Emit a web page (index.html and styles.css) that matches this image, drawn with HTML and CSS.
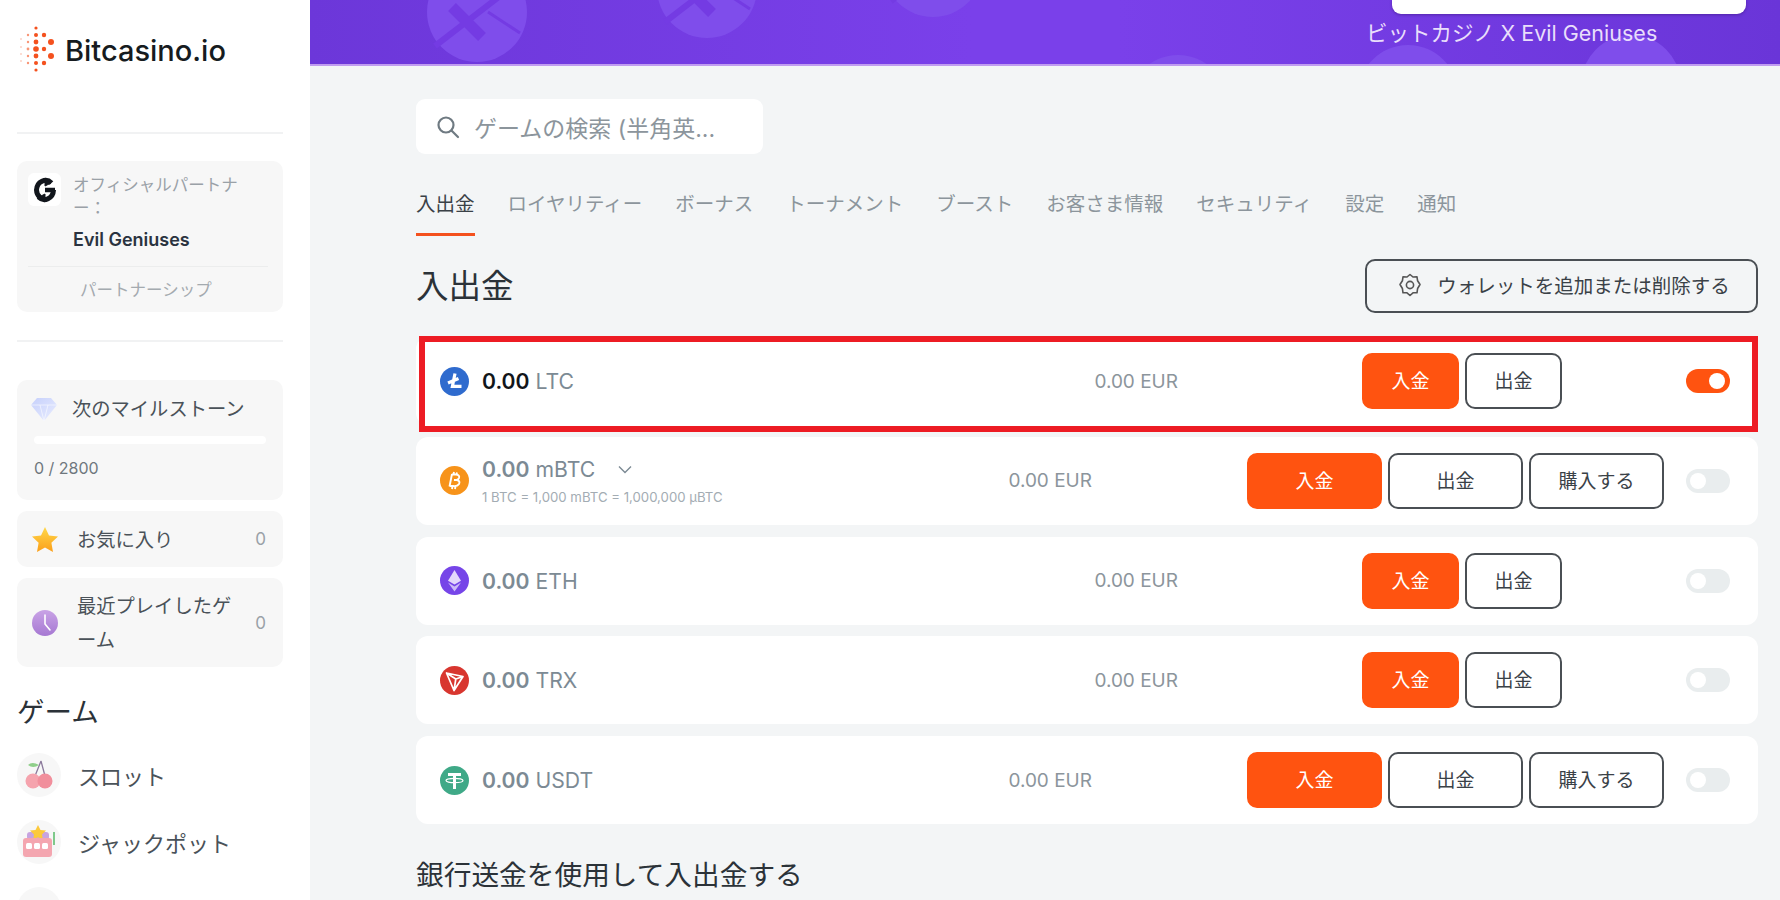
FILE: index.html
```html
<!DOCTYPE html>
<html lang="ja">
<head>
    <meta charset="utf-8">
    <title>Bitcasino.io</title>
    <link rel="stylesheet" href="styles.css">
</head>
<body>
<div class="page">

    <aside class="sidebar">
        <div class="logo">
            <svg class="logo-mark" width="36" height="50" viewBox="0 0 36 50" fill="#f4511e">
                <g opacity=".25"><circle cx="1" cy="14" r="1"/><circle cx="1" cy="22" r="1"/><circle cx="1" cy="29" r="1"/><circle cx="1" cy="36" r="1"/></g>
                <g opacity=".6"><circle cx="8" cy="10" r="1.2"/><circle cx="8" cy="17" r="1.2"/><circle cx="8" cy="24" r="1.4"/><circle cx="8" cy="31" r="1.2"/><circle cx="8" cy="38" r="1.2"/></g>
                <circle cx="16" cy="3" r="1.6"/><circle cx="16" cy="10" r="2"/><circle cx="16" cy="17" r="2.4"/><circle cx="16" cy="24" r="2.8"/><circle cx="16" cy="31" r="2.4"/><circle cx="16" cy="38" r="2"/><circle cx="16" cy="45" r="1.6"/>
                <circle cx="24" cy="10" r="2.2"/><circle cx="24" cy="24" r="2.2"/><circle cx="24" cy="38" r="2.2"/>
                <circle cx="31" cy="17" r="3"/><circle cx="31" cy="31" r="3"/>
            </svg>
            <span class="logo-text">Bitcasino.io</span>
        </div>

        <div class="side-line"></div>

        <div class="side-card partner">
            <div class="partner-top">
                <span class="partner-icon">
                    <svg width="24" height="26" viewBox="0 0 24 26" fill="none" stroke="#12161c" stroke-width="5">
                        <path d="M18.5 6 A9 10 0 0 0 3.5 13 A9 10 0 0 0 7 20.5"/>
                        <path d="M5.5 20 A9 10 0 0 0 20.5 13"/>
                        <path d="M12 13 H22" stroke-width="4.5"/>
                        <path d="M12 1 L18 6 L12 9Z M12 25 L6 20 L12 17Z" fill="#12161c" stroke-width="1"/>
                    </svg>
                </span>
                <div class="partner-text">
                    <div class="partner-label">オフィシャルパートナー：</div>
                    <div class="partner-name">Evil Geniuses</div>
                </div>
            </div>
            <div class="partner-link">パートナーシップ</div>
        </div>

        <div class="side-line second"></div>

        <div class="side-card milestone">
            <div class="milestone-top">
                <svg width="26" height="24" viewBox="0 0 26 24">
                    <defs><linearGradient id="gem" x1="0" y1="0" x2="1" y2="1"><stop offset="0" stop-color="#c6d0fb"/><stop offset="1" stop-color="#e9edff"/></linearGradient></defs>
                    <path d="M6 1 H20 L26 8 L13 24 L0 8Z" fill="url(#gem)"/>
                    <path d="M0 8 H26 M9 8 L13 24 L17 8" stroke="#fff" stroke-width=".8" fill="none" opacity=".7"/>
                </svg>
                <span>次のマイルストーン</span>
            </div>
            <div class="progress"></div>
            <div class="milestone-count">0 / 2800</div>
        </div>

        <div class="side-card count-card">
            <svg width="26" height="25" viewBox="0 0 26 25">
                <defs><linearGradient id="star" x1="0" y1="0" x2="0" y2="1"><stop offset="0" stop-color="#ffd84a"/><stop offset="1" stop-color="#fb9f1a"/></linearGradient></defs>
                <path d="M13 0 L17 8.5 L26 9.6 L19.4 15.8 L21 25 L13 20.4 L5 25 L6.6 15.8 L0 9.6 L9 8.5Z" fill="url(#star)"/>
            </svg>
            <span class="count-name">お気に入り</span>
            <span class="count-num">0</span>
        </div>

        <div class="side-card count-card">
            <svg width="26" height="26" viewBox="0 0 26 26">
                <defs><linearGradient id="clock" x1="0" y1="0" x2="0" y2="1"><stop offset="0" stop-color="#c9a3e6"/><stop offset="1" stop-color="#a678d2"/></linearGradient></defs>
                <circle cx="13" cy="13" r="13" fill="url(#clock)"/>
                <path d="M13 5 V14 L18 20" stroke="#fff" stroke-width="1.6" fill="none" stroke-linecap="round"/>
            </svg>
            <span class="count-name">最近プレイしたゲーム</span>
            <span class="count-num">0</span>
        </div>

        <h3 class="side-title">ゲーム</h3>

        <div class="game-item">
            <span class="game-icon">
                <svg width="28" height="30" viewBox="0 0 28 30">
                    <path d="M16 1 L10 16 M16 1 L20 16" stroke="#8c7a9c" stroke-width="1.3" fill="none"/>
                    <path d="M14 5 Q7 1 3 5 Q8 9 14 5Z" fill="#8fcf8a"/>
                    <circle cx="8" cy="21" r="7.5" fill="#f5a3ad"/>
                    <circle cx="20" cy="21" r="7.5" fill="#f18f9c"/>
                </svg>
            </span>
            <span>スロット</span>
        </div>

        <div class="game-item">
            <span class="game-icon">
                <svg width="34" height="34" viewBox="0 0 34 34">
                    <rect x="5" y="7" width="22" height="8" rx="3" fill="#c7a4e0"/>
                    <path d="M16 0 L18.5 5 L24 5.6 L20 9.4 L21 15 L16 12.3 L11 15 L12 9.4 L8 5.6 L13.5 5Z" fill="#fcc93c"/>
                    <rect x="1" y="13" width="29" height="19" rx="3" fill="#f4a6b0"/>
                    <rect x="4" y="18" width="6" height="6" rx="1.5" fill="#fff"/>
                    <rect x="12" y="18" width="6" height="6" rx="1.5" fill="#fff"/>
                    <rect x="20" y="18" width="6" height="6" rx="1.5" fill="#fff"/>
                    <path d="M32 7 V20" stroke="#7fc98b" stroke-width="2"/>
                </svg>
            </span>
            <span>ジャックポット</span>
        </div>

        <div class="game-item">
            <span class="game-icon">
                <svg width="28" height="30" viewBox="0 0 28 30"><circle cx="14" cy="15" r="9" fill="#5fc98a"/></svg>
            </span>
        </div>
    </aside>

    <main class="main">
        <div class="banner">
            <svg class="banner-art" width="1470" height="65" viewBox="0 0 1470 65">
                <defs>
                    <g id="eg-mark">
                        <circle cx="57" cy="12" r="50" fill="#7f4deb"/>
                        <g fill="none" stroke="#743be3">
                            <path d="M15 46 L80 -4" stroke-width="6"/>
                            <path d="M32 7 L62 37" stroke-width="11"/>
                            <path d="M68 12 L100 33" stroke-width="3"/>
                        </g>
                    </g>
                </defs>
                <use href="#eg-mark" x="110" y="0"/>
                <use href="#eg-mark" x="340" y="-24"/>
                <use href="#eg-mark" x="566" y="-45"/>
                <use href="#eg-mark" x="811" y="93"/>
                <use href="#eg-mark" x="1041" y="83"/>
                <use href="#eg-mark" x="1264" y="73"/>
            </svg>
            <div class="banner-side">
                <div class="banner-button"></div>
                <div class="banner-text">ビットカジノ X Evil Geniuses</div>
            </div>
        </div>

        <div class="content">
            <div class="search">
                <svg width="26" height="26" viewBox="0 0 26 26" fill="none" stroke="#6f7a82" stroke-width="2.2">
                    <circle cx="11" cy="11" r="7.5"/>
                    <path d="M16.5 16.5 L23 23" stroke-linecap="round"/>
                </svg>
                <span>ゲームの検索 (半角英...</span>
            </div>

            <nav class="tabs">
                <span class="tab active">入出金</span>
                <span class="tab">ロイヤリティー</span>
                <span class="tab">ボーナス</span>
                <span class="tab">トーナメント</span>
                <span class="tab">ブースト</span>
                <span class="tab">お客さま情報</span>
                <span class="tab">セキュリティ</span>
                <span class="tab">設定</span>
                <span class="tab">通知</span>
            </nav>

            <div class="title-row">
                <h1>入出金</h1>
                <button class="wallet-btn">
                    <svg width="22" height="24" viewBox="0 0 22 24" fill="none" stroke="#555" stroke-width="1.6">
                        <path d="M11 1.5 L14 4 L18 3.8 L18.6 7.8 L21 11.5 L18.6 15.5 L18 19.8 L14 19.8 L11 22.5 L8 19.8 L4 19.8 L3.4 15.5 L1 11.5 L3.4 7.8 L4 3.8 L8 4Z" stroke-linejoin="round"/>
                        <circle cx="11" cy="12" r="3.6"/>
                    </svg>
                    <span>ウォレットを追加または削除する</span>
                </button>
            </div>

            <div class="wallets">
                <div class="wallet wallet-short marked">
                    <svg class="coin" width="29" height="29" viewBox="0 0 29 29">
                        <circle cx="14.5" cy="14.5" r="14.5" fill="#2f6bce"/>
                        <path d="M15 6.5 L12.4 19.4 H21.5 M8 16 L18.5 11.6" stroke="#fff" stroke-width="3.2" fill="none"/>
                    </svg>
                    <div class="amount active"><b>0.00</b> LTC</div>
                    <div class="eur">0.00 EUR</div>
                    <div class="actions">
                        <button class="btn deposit">入金</button>
                        <button class="btn">出金</button>
                    </div>
                    <span class="toggle on"></span>
                </div>

                <div class="wallet wallet-long">
                    <svg class="coin" width="29" height="29" viewBox="0 0 29 29">
                        <circle cx="14.5" cy="14.5" r="14.5" fill="#f7931a"/>
                        <path d="M12 8 L9.5 20.5 M12 8.5 H16 Q20 9 19 12 Q18 14.5 14 14 M14 14 H17 Q20.5 15 19 18 Q17.5 20.5 13 20 H9.5 M14 6 L13.4 9 M17 6.5 L16.4 9 M12.5 20 L12 23 M15.5 20 L15 23" stroke="#fff" stroke-width="1.9" fill="none"/>
                    </svg>
                    <div class="amount-wrap">
                        <div class="amount">
                            <b>0.00</b> mBTC
                            <svg class="chevron" width="14" height="9" viewBox="0 0 14 9" fill="none" stroke="#7c8a94" stroke-width="1.4"><path d="M1 1.5 L7 7.5 L13 1.5"/></svg>
                        </div>
                        <div class="rate">1 BTC = 1,000 mBTC = 1,000,000 μBTC</div>
                    </div>
                    <div class="eur">0.00 EUR</div>
                    <div class="actions">
                        <button class="btn deposit">入金</button>
                        <button class="btn">出金</button>
                        <button class="btn">購入する</button>
                    </div>
                    <span class="toggle"></span>
                </div>

                <div class="wallet wallet-short">
                    <svg class="coin" width="29" height="29" viewBox="0 0 29 29">
                        <circle cx="14.5" cy="14.5" r="14.5" fill="#7645e8"/>
                        <path d="M14.5 4 L21 14.8 L14.5 18.6 L8 14.8Z" fill="#e3d8fb"/>
                        <path d="M8 16.6 L14.5 20.4 L21 16.6 L14.5 25.5Z" fill="#cdbcf7"/>
                    </svg>
                    <div class="amount"><b>0.00</b> ETH</div>
                    <div class="eur">0.00 EUR</div>
                    <div class="actions">
                        <button class="btn deposit">入金</button>
                        <button class="btn">出金</button>
                    </div>
                    <span class="toggle"></span>
                </div>

                <div class="wallet wallet-short">
                    <svg class="coin" width="29" height="29" viewBox="0 0 29 29">
                        <circle cx="14.5" cy="14.5" r="14.5" fill="#d8362f"/>
                        <path d="M6.5 7 L23 10.5 L14 24.5Z M6.5 7 L14 24.5 L15.8 13 Z M15.8 13 L23 10.5" stroke="#fff" stroke-width="1.7" fill="none" stroke-linejoin="round"/>
                    </svg>
                    <div class="amount"><b>0.00</b> TRX</div>
                    <div class="eur">0.00 EUR</div>
                    <div class="actions">
                        <button class="btn deposit">入金</button>
                        <button class="btn">出金</button>
                    </div>
                    <span class="toggle"></span>
                </div>

                <div class="wallet wallet-long">
                    <svg class="coin" width="29" height="29" viewBox="0 0 29 29">
                        <circle cx="14.5" cy="14.5" r="14.5" fill="#3fa987"/>
                        <path d="M8 8.5 H21 M14.5 8.5 V23" stroke="#fff" stroke-width="3" fill="none"/>
                        <ellipse cx="14.5" cy="14.5" rx="8.5" ry="2.2" stroke="#fff" stroke-width="1.2" fill="none"/>
                    </svg>
                    <div class="amount"><b>0.00</b> USDT</div>
                    <div class="eur">0.00 EUR</div>
                    <div class="actions">
                        <button class="btn deposit">入金</button>
                        <button class="btn">出金</button>
                        <button class="btn">購入する</button>
                    </div>
                    <span class="toggle"></span>
                </div>
            </div>

            <h2 class="bank-title">銀行送金を使用して入出金する</h2>
        </div>
    </main>

</div>
</body>
</html>
```

FILE: styles.css
```css
*, *::before, *::after {
    box-sizing: border-box;
}

html, body {
    margin: 0;
    height: 100%;
    overflow: hidden;
}

body {
    font-family: Inter, "Noto Sans CJK JP", sans-serif;
    color: #2b3238;
    background-color: #f3f5f6;
}

.page {
    display: flex;
    height: 900px;
    overflow: hidden;
}

/* sidebar */
.sidebar {
    width: 310px;
    flex-shrink: 0;
    height: 900px;
    padding: 25px 27px 0 17px;
    background-color: #fff;
    overflow: hidden;
}

.logo {
    display: flex;
    align-items: center;
    height: 50px;
    padding-left: 3px;
}

.logo-text {
    margin-left: 9px;
    font-size: 29px;
    font-weight: 500;
    color: #161b20;
}

.side-line {
    height: 2px;
    margin-top: 57px;
    background-color: #f1f2f3;
}

.side-line.second {
    margin-top: 28px;
}

.side-card {
    background-color: #f7f7f7;
    border-radius: 10px;
}

.partner {
    height: 151px;
    margin-top: 27px;
    padding: 12px 15px 0 11px;
}

.partner-top {
    display: flex;
    gap: 12px;
    height: 94px;
    border-bottom: 1px solid #eceded;
}

.partner-icon {
    display: flex;
    align-items: center;
    justify-content: center;
    width: 33px;
    height: 33px;
    flex-shrink: 0;
    background-color: #fff;
    border-radius: 6px;
}

.partner-text {
    min-width: 0;
    padding-top: 1px;
}

.partner-label {
    font-size: 16.5px;
    line-height: 23px;
    color: #9aa1a7;
}

.partner-name {
    margin-top: 9px;
    font-size: 18px;
    line-height: 22px;
    font-weight: 600;
    color: #2a3340;
}

.partner-link {
    padding-top: 12px;
    padding-left: 52px;
    font-size: 16.5px;
    line-height: 23px;
    color: #a4aaaf;
}

.milestone {
    height: 120px;
    margin-top: 38px;
    padding: 17px 17px 0 14px;
}

.milestone-top {
    display: flex;
    align-items: center;
    gap: 15px;
    font-size: 19.3px;
    line-height: 24px;
    color: #4a5259;
}

.progress {
    height: 8px;
    margin: 15px 0 0 3px;
    background-color: #fff;
    border-radius: 4px;
}

.milestone-count {
    margin: 13px 0 0 3px;
    font-size: 16px;
    line-height: 22px;
    color: #6f777e;
}

.count-card {
    display: flex;
    align-items: center;
    margin-top: 11px;
    min-height: 56px;
    padding: 0 17px 0 15px;
    font-size: 19.3px;
    line-height: 34px;
    color: #4a5259;
}

.count-name {
    flex: 1;
    margin-left: 19px;
    padding: 11px 0 10px;
}

.count-num {
    margin-left: 20px;
    font-size: 17px;
    color: #9aa1a7;
}

.side-title {
    margin: 27px 0 0;
    font-size: 27.5px;
    line-height: 36px;
    font-weight: 400;
    color: #2b3238;
}

.game-item {
    display: flex;
    align-items: center;
    gap: 17px;
    margin-top: 23px;
    font-size: 22px;
    color: #4a5259;
}

.game-icon {
    display: flex;
    align-items: center;
    justify-content: center;
    width: 44px;
    height: 44px;
    flex-shrink: 0;
    background-color: #f7f7f7;
    border-radius: 50%;
}

/* main column */
.main {
    flex: 1;
    min-width: 0;
}

.banner {
    position: relative;
    display: flex;
    justify-content: flex-end;
    height: 66px;
    padding-right: 34px;
    background: linear-gradient(90deg, #6c37d9 0%, #7a40ea 45%, #7a40ea 55%, #6a35d8 100%);
    border-bottom: 2px solid #c09cf0;
    overflow: hidden;
}

.banner-art {
    position: absolute;
    top: 0;
    left: 0;
}

.banner-side {
    position: relative;
    width: 380px;
}

.banner-button {
    width: 354px;
    height: 14px;
    margin-left: 26px;
    background-color: #fff;
    border-radius: 0 0 9px 9px;
    box-shadow: 0 1px 3px rgba(40, 10, 90, .4);
}

.banner-text {
    margin-top: 6px;
    font-size: 21.5px;
    line-height: 26px;
    color: #e9defb;
    white-space: nowrap;
}

.content {
    padding: 33px 22px 0 106px;
}

.search {
    display: flex;
    align-items: center;
    gap: 13px;
    width: 347px;
    height: 55px;
    padding-left: 19px;
    background-color: #fff;
    border-radius: 9px;
    font-size: 23px;
    color: #8c959c;
    white-space: nowrap;
}

.tabs {
    display: flex;
    gap: 33px;
    margin-top: 30px;
}

.tab {
    height: 52px;
    padding-top: 6px;
    font-size: 19.5px;
    line-height: 28px;
    color: #8c959c;
    white-space: nowrap;
}

.tab.active {
    color: #3a4147;
    border-bottom: 3px solid #f4511e;
}

.title-row {
    display: flex;
    align-items: center;
    justify-content: space-between;
    margin-top: 23px;
}

h1 {
    margin: 0 0 6px;
    font-size: 32.5px;
    font-weight: 400;
    color: #2b3238;
}

.wallet-btn {
    display: flex;
    align-items: center;
    justify-content: center;
    gap: 16px;
    width: 393px;
    height: 54px;
    padding: 0 0 3px 6px;
    background: none;
    border: 2px solid #4a4f54;
    border-radius: 10px;
    font-family: inherit;
    font-size: 19.5px;
    color: #3a4147;
}

.wallets {
    display: flex;
    flex-direction: column;
    gap: 11.75px;
    margin-top: 24px;
}

.wallet {
    position: relative;
    display: flex;
    align-items: center;
    height: 88px;
    padding: 0 28px 0 24px;
    background-color: #fff;
    border-radius: 12px;
}

.wallet.marked {
    z-index: 1;
}

.wallet.marked > * {
    position: relative;
    z-index: 1;
}

/* red annotation box drawn over the first wallet */
.wallet.marked::before {
    content: "";
    position: absolute;
    top: -1px;
    left: 3px;
    right: 0;
    height: 96px;
    background-color: #fff;
    border: 6px solid #ed1c24;
}

.coin {
    flex-shrink: 0;
}

.amount-wrap {
    margin-left: 13px;
}

.amount {
    margin-left: 13px;
    font-size: 21.2px;
    line-height: 28px;
    color: #7c8a94;
    white-space: nowrap;
}

.amount-wrap .amount {
    margin-left: 0;
}

.amount b {
    font-weight: 600;
}

.amount.active b {
    color: #12161a;
}

.chevron {
    margin-left: 17px;
    vertical-align: 3px;
}

.rate {
    margin-top: 5px;
    font-size: 13.2px;
    line-height: 18px;
    color: #a3acb3;
    white-space: nowrap;
}

.eur {
    margin-left: auto;
    font-size: 19px;
    color: #8c959c;
    white-space: nowrap;
}

.actions {
    display: flex;
    gap: 6px;
}

.wallet-short .actions {
    margin-left: 184px;
    margin-right: 124px;
}

.wallet-long .actions {
    margin-left: 155px;
    margin-right: 22px;
}

.btn {
    height: 56px;
    padding-bottom: 4px;
    background-color: #fff;
    border: 2px solid #4a4f54;
    border-radius: 10px;
    font-family: inherit;
    font-size: 19px;
    color: #3a4147;
}

.wallet-short .btn {
    width: 97px;
}

.wallet-long .btn {
    width: 135px;
}

.btn.deposit {
    background-color: #ff5310;
    border-color: #ff5310;
    color: #fff;
}

.toggle {
    position: relative;
    width: 44px;
    height: 24px;
    flex-shrink: 0;
    background-color: #e9edee;
    border-radius: 12px;
}

.toggle::after {
    content: "";
    position: absolute;
    top: 4px;
    left: 4px;
    width: 16px;
    height: 16px;
    background-color: #fff;
    border-radius: 50%;
}

.toggle.on {
    background-color: #ff5310;
}

.toggle.on::after {
    left: 23px;
}

.bank-title {
    margin: 31px 0 0;
    font-size: 27.7px;
    line-height: 40px;
    font-weight: 400;
    color: #2b3238;
}
```
